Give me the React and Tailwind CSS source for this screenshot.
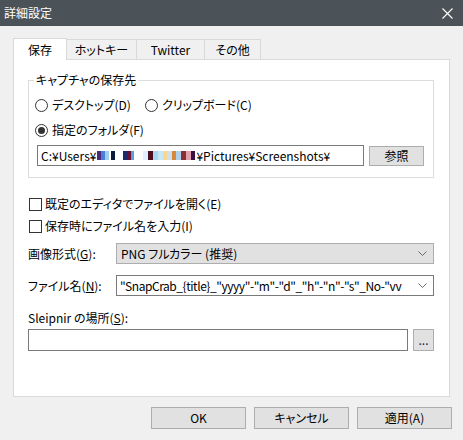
import React from 'react';

const mosaic = [
  ['#4b2a7a', 4], ['#4a7fd8', 4], ['#9fd0f0', 4], ['#ffffff', 2], ['#0d1b3d', 4],
  ['#ffffff', 8], ['#1b2a6a', 4], ['#6a1030', 4], ['#5aa0e8', 3], ['#ffffff', 9],
  ['#e0f0ff', 5], ['#4a1020', 5], ['#a8d8f0', 5], ['#c8e8f8', 5], ['#f8d890', 4],
  ['#d0e0f0', 5], ['#d8883a', 4], ['#b0d0f0', 5], ['#8a3030', 5], ['#e0a0b0', 5],
  ['#3a1040', 4],
];

function Radio({ checked, children }) {
  return (
    <label className="flex items-center h-[16px]">
      <span className="w-[13px] h-[13px] rounded-full border border-[#333333] bg-white flex items-center justify-center">
        {checked && <span className="w-[7px] h-[7px] rounded-full bg-[#333333]" />}
      </span>
      <span className="ml-[4px]">{children}</span>
    </label>
  );
}

function Check({ children }) {
  return (
    <label className="flex items-center h-[16px]">
      <span className="w-[13px] h-[13px] border border-[#333333] bg-white" />
      <span className="ml-[3px]">{children}</span>
    </label>
  );
}

function Chevron() {
  return (
    <svg width="9" height="5" viewBox="0 0 9 5" className="shrink-0">
      <path d="M0.5 0.5 L4.5 4.5 L8.5 0.5" fill="none" stroke="#6b6b6b" strokeWidth="1" />
    </svg>
  );
}

export default function App() {
  const tabs = [
    { label: 'ホットキー', w: 'w-[71px]' },
    { label: 'Twitter', w: 'w-[69px]' },
    { label: 'その他', w: 'w-[57px]' },
  ];

  return (
    <div className="w-[463px] h-[440px] overflow-hidden bg-[#f0f0f0] text-[12px] leading-[16px] text-black font-['Noto_Sans_CJK_JP','Noto_Sans',sans-serif] [font-feature-settings:'palt']">
      {/* title bar */}
      <div className="h-[26px] bg-[#4b5359] flex items-center justify-between pl-[4px] pr-[10px] text-white">
        <span>詳細設定</span>
        <svg width="11" height="11" viewBox="0 0 11 11">
          <path d="M0.5 0.5 L10.5 10.5 M10.5 0.5 L0.5 10.5" stroke="#ffffff" strokeWidth="1.1" />
        </svg>
      </div>

      <div className="px-[13px] pt-[12px]">
        {/* tabs */}
        <div className="flex items-end h-[21px]">
          <div className="relative z-10 -mb-px w-[54px] h-[22px] bg-white border border-b-0 border-[#d9d9d9] flex items-center justify-center">
            保存
          </div>
          {tabs.map((t) => (
            <div
              key={t.label}
              className={`${t.w} h-[20px] -ml-px bg-[#f0f0f0] border border-b-0 border-[#d9d9d9] flex items-center justify-center`}
            >
              {t.label}
            </div>
          ))}
        </div>

        {/* panel */}
        <div className="h-[338px] bg-white border border-[#d9d9d9] pl-[14px] pr-[15px] pt-[12px]">
          <fieldset className="border border-[#dcdcdc]">
            <legend className="ml-[5px] px-[2px]">キャプチャの保存先</legend>
            <div className="pl-[6px] pr-[9px] pb-[11px]">
              <div className="mt-[9px] flex">
                <div className="w-[110px]">
                  <Radio>デスクトップ(D)</Radio>
                </div>
                <Radio>クリップボード(C)</Radio>
              </div>
              <div className="mt-[9px]">
                <Radio checked>指定のフォルダ(F)</Radio>
              </div>
              <div className="mt-[7px] ml-[2px] flex items-center gap-[5px]">
                <div className="w-[327px] h-[21px] border border-[#7a7a7a] bg-white flex items-center pl-[3px] whitespace-nowrap overflow-hidden">
                  <span>C:¥Users¥</span>
                  <span className="flex h-[9px] mx-[1px]">
                    {mosaic.map(([c, w], i) => (
                      <span key={i} className="h-full" style={{ background: c, width: w }} />
                    ))}
                  </span>
                  <span>¥Pictures¥Screenshots¥</span>
                </div>
                <button className="w-[55px] h-[20px] bg-[#e1e1e1] border border-[#adadad] flex items-center justify-center">
                  参照
                </button>
              </div>
            </div>
          </fieldset>

          <div className="mt-[18px] ml-[1px]">
            <Check>既定のエディタでファイルを開く(E)</Check>
          </div>
          <div className="mt-[6px] ml-[1px]">
            <Check>保存時にファイル名を入力(I)</Check>
          </div>

          <div className="mt-[9px] flex items-center">
            <span className="w-[88px] shrink-0 whitespace-nowrap">
              画像形式(<span className="underline">G</span>):
            </span>
            <div className="flex-1 min-w-0 h-[21px] bg-[#e1e1e1] border border-[#adadad] flex items-center justify-between pl-[4px] pr-[6px]">
              <span>PNG フルカラー (推奨)</span>
              <Chevron />
            </div>
          </div>

          <div className="mt-[11px] flex items-center">
            <span className="w-[88px] shrink-0 whitespace-nowrap">
              ファイル名(<span className="underline">N</span>):
            </span>
            <div className="flex-1 min-w-0 h-[21px] bg-white border border-[#7a7a7a] flex items-center pl-[3px] pr-[6px] gap-[6px]">
              <span className="flex-1 min-w-0 whitespace-nowrap overflow-hidden tracking-[-0.45px]">
                "SnapCrab_{'{title}'}_"yyyy"-"m"-"d"_"h"-"n"-"s"_No-"vv
              </span>
              <Chevron />
            </div>
          </div>

          <div className="mt-[14px]">
            Sleipnir の場所(<span className="underline">S</span>):
          </div>
          <div className="mt-[3px] flex items-center gap-[5px]">
            <div className="flex-1 h-[22px] border border-[#7a7a7a] bg-white" />
            <button className="w-[21px] h-[22px] bg-[#e1e1e1] border border-[#adadad] flex items-center justify-center text-[#1a1a4a]">
              ...
            </button>
          </div>
        </div>
      </div>

      {/* bottom buttons */}
      <div className="mt-[10px] flex justify-end gap-[8px] pr-[11px]">
        <button className="w-[95px] h-[22px] bg-[#e1e1e1] border border-[#adadad]">OK</button>
        <button className="w-[95px] h-[22px] bg-[#e1e1e1] border border-[#adadad]">キャンセル</button>
        <button className="w-[95px] h-[22px] bg-[#e1e1e1] border border-[#adadad]">適用(A)</button>
      </div>
    </div>
  );
}
